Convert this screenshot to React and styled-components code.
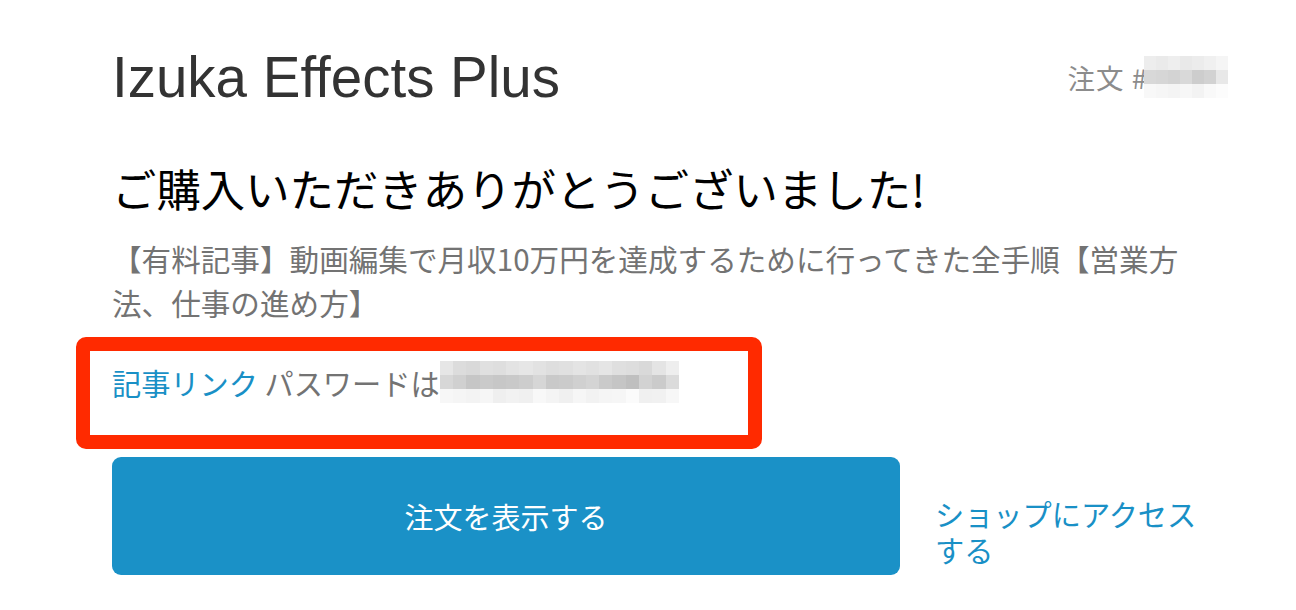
import React from 'react'
import styled, { createGlobalStyle } from 'styled-components'

const GlobalStyle = createGlobalStyle`
  html, body {
    margin: 0;
    padding: 0;
    background: #fff;
  }
  body {
    font-family: "Liberation Sans", "Noto Sans CJK JP", sans-serif;
    -webkit-font-smoothing: antialiased;
  }
`

const Page = styled.div`
  width: 1116px;
  padding: 50px 0 0 112px;
`

const Header = styled.header`
  display: flex;
  justify-content: space-between;
  align-items: flex-start;
`

const ShopTitle = styled.h1`
  margin: 0;
  font-family: "Liberation Sans", sans-serif;
  font-weight: 400;
  font-size: 56.5px;
  line-height: 56px;
  color: #333333;
`

const OrderNumber = styled.div`
  display: flex;
  align-items: center;
  margin-top: 6px;
  font-family: "Noto Sans CJK JP", sans-serif;
  font-size: 27.5px;
  line-height: 42px;
  letter-spacing: 1px;
  color: #8c8c8c;
`

const Mosaic = styled.span`
  display: inline-grid;
  grid-template-columns: repeat(${p => p.$cols}, ${p => p.$cell}px);
  grid-auto-rows: ${p => p.$row}px;
  vertical-align: middle;
  margin-left: ${p => p.$gap || 0}px;
`

const Cell = styled.span`
  background: ${p => p.$shade};
`

const Thanks = styled.h2`
  margin: 56px 0 0;
  font-family: "Noto Sans CJK JP", sans-serif;
  font-weight: 400;
  font-size: 44.4px;
  line-height: 52px;
  color: #000;
`

const Product = styled.p`
  margin: 23px 0 0;
  width: 1090px;
  font-family: "Noto Sans CJK JP", sans-serif;
  font-size: 29.6px;
  line-height: 44px;
  color: #737373;
`

const NoteRow = styled.div`
  position: relative;
  margin-top: 35px;
  display: flex;
  align-items: center;
  font-family: "Noto Sans CJK JP", sans-serif;
  font-size: 29.2px;
  line-height: 44px;
  color: #737373;
`

const Link = styled.a`
  color: #1990c6;
  text-decoration: none;
  cursor: pointer;
`

const Highlight = styled.div`
  position: absolute;
  left: -36px;
  top: -23px;
  width: 686px;
  height: 112px;
  box-sizing: border-box;
  border: 14px solid #ff2a00;
  border-radius: 10px;
  pointer-events: none;
`

const Actions = styled.div`
  display: flex;
  align-items: center;
  gap: 35px;
  margin-top: 53px;
`

const PrimaryButton = styled.button`
  width: 788px;
  height: 118px;
  border: none;
  border-radius: 9px;
  background: #1a91c7;
  color: #fff;
  font-family: "Noto Sans CJK JP", sans-serif;
  font-size: 29px;
  cursor: pointer;
`

const ShopLink = styled(Link)`
  width: 280px;
  margin-top: 30px;
  font-family: "Noto Sans CJK JP", sans-serif;
  font-size: 29.2px;
  line-height: 36px;
`

const passwordShades = [
  ['#e6e6e6', '#dcdcdc', '#d9d9d9', '#e0e0e0', '#dedede', '#e3e3e3', '#e6e6e6', '#e2e2e2', '#dedede', '#e0e0e0', '#e4e4e4', '#e1e1e1', '#e5e5e5', '#dfdfdf', '#dddddd', '#d9d9d9', '#e4e4e4', '#eeeeee'],
  ['#d7d7d7', '#d0d0d0', '#c6c6c6', '#cacaca', '#c7c7c7', '#c9c9c9', '#cdcdcd', '#d6d6d6', '#c9c9c9', '#cbcbcb', '#d0d0d0', '#d4d4d4', '#cacaca', '#c5c5c5', '#bfbfbf', '#d2d2d2', '#cbcbcb', '#dbdbdb'],
  ['#f7f7f7', '#f5f5f5', '#f3f3f3', '#f6f6f6', '#efefef', '#f2f2f2', '#f0f0f0', '#f8f8f8', '#f4f4f4', '#f0f0f0', '#f6f6f6', '#f2f2f2', '#f5f5f5', '#f6f6f6', '#fbfbfb', '#f0f0f0', '#f1f1f1', '#f7f7f7'],
]

const orderShades = [
  ['#ededed', '#eaeaea', '#eeeeee', '#e9e9e9', '#ececec', '#f0f0f0', '#f5f5f5'],
  ['#d8d8d8', '#d6d6d6', '#d3d3d3', '#d9d9d9', '#cdcdcd', '#d2d2d2', '#e8e8e8'],
  ['#f8f8f8', '#f6f6f6', '#f4f4f4', '#f7f7f7', '#f3f3f3', '#f9f9f9', '#fcfcfc'],
]

const Blurred = ({ shades, cell, row, gap }) => (
  <Mosaic $cols={shades[0].length} $cell={cell} $row={row} $gap={gap}>
    {shades.flat().map((s, i) => (
      <Cell key={i} $shade={s} />
    ))}
  </Mosaic>
)

export default function App() {
  return (
    <>
      <GlobalStyle />
      <Page>
        <Header>
          <ShopTitle>Izuka Effects Plus</ShopTitle>
          <OrderNumber>
            注文 #
            <Blurred shades={orderShades} cell={12} row={14} gap={-4} />
          </OrderNumber>
        </Header>
        <Thanks>ご購入いただきありがとうございました!</Thanks>
        <Product>【有料記事】動画編集で月収10万円を達成するために行ってきた全手順【営業方法、仕事の進め方】</Product>
        <NoteRow>
          <Link>記事リンク</Link>
          &nbsp;パスワードは
          <Blurred shades={passwordShades} cell={13.3} row={14} gap={0} />
          <Highlight />
        </NoteRow>
        <Actions>
          <PrimaryButton>注文を表示する</PrimaryButton>
          <ShopLink>ショップにアクセスする</ShopLink>
        </Actions>
      </Page>
    </>
  )
}
